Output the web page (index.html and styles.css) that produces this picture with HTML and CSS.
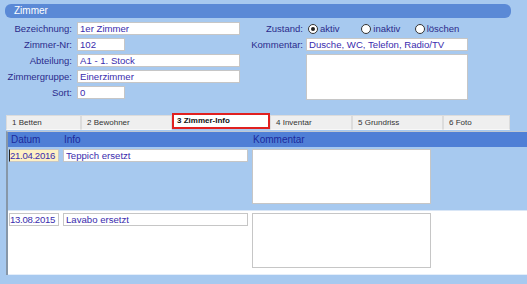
FILE: index.html
```html
<!DOCTYPE html>
<html lang="de">
<head>
  <meta charset="UTF-8" />
  <title>Zimmer</title>
  <link rel="stylesheet" href="styles.css">
</head>
<body>
  <div class="titlebar">Zimmer</div>

  <div class="form">
    <div class="fields">
      <label>Bezeichnung:</label>
      <input type="text" class="wide" value="1er Zimmer">
      <label>Zimmer-Nr:</label>
      <input type="text" class="short" value="102">
      <label>Abteilung:</label>
      <input type="text" class="wide" value="A1 - 1. Stock">
      <label>Zimmergruppe:</label>
      <input type="text" class="wide" value="Einerzimmer">
      <label>Sort:</label>
      <input type="text" class="short" value="0">
    </div>

    <div class="fields right">
      <label>Zustand:</label>
      <div class="radios">
        <span class="radio"><i class="dot checked"></i>aktiv</span>
        <span class="radio"><i class="dot"></i>inaktiv</span>
        <span class="radio"><i class="dot"></i>löschen</span>
      </div>
      <label>Kommentar:</label>
      <input type="text" class="wide" value="Dusche, WC, Telefon, Radio/TV">
      <span></span>
      <textarea class="note"></textarea>
    </div>
  </div>

  <div class="tabs">
    <div class="tab t1">1 Betten</div>
    <div class="tab t2">2 Bewohner</div>
    <div class="tab t3 active">3 Zimmer-Info</div>
    <div class="tab t4">4 Inventar</div>
    <div class="tab t5">5 Grundriss</div>
    <div class="tab t6">6 Foto</div>
  </div>

  <div class="grid">
    <div class="grid-head">
      <span class="c-date">Datum</span>
      <span class="c-info">Info</span>
      <span class="c-note">Kommentar</span>
    </div>
    <div class="grid-row alt">
      <input type="text" class="c-date focus" value="21.04.2016">
      <input type="text" class="c-info" value="Teppich ersetzt">
      <textarea class="c-note"></textarea>
    </div>
    <div class="grid-row">
      <input type="text" class="c-date" value="13.08.2015">
      <input type="text" class="c-info" value="Lavabo ersetzt">
      <textarea class="c-note"></textarea>
    </div>
  </div>
</body>
</html>
```

FILE: styles.css
```css
/* Grundlayout */
*, *::before, *::after {
  box-sizing: border-box;
}
body {
  margin: 0;
  padding: 4px 0 0;
  background-color: #a7c9ef;
  font-family: 'Liberation Sans', Arial, sans-serif;
  font-size: 9.5px;
  color: #2b2b8c;
  overflow: hidden;
}
input, textarea {
  font-family: inherit;
  font-size: 9.6px;
  color: #3a2cae;
  margin: 0;
  background: #fff;
  border: 1px solid #c6c6c6;
  border-radius: 0;
  outline: none;
}
input {
  height: 13px;
  padding: 0 2px;
  line-height: 11px;
}
textarea {
  resize: none;
  padding: 1px 2px;
}

/* Titelleiste */
.titlebar {
  height: 14px;
  margin: 0 16px 0 5px;
  padding-left: 9px;
  border-radius: 6px;
  background-color: #5a89d6;
  color: #fff;
  font-size: 10px;
  line-height: 14px;
}

/* Formular oben */
.form {
  display: flex;
  margin-top: 4px;
}
.fields {
  display: grid;
  grid-template-columns: 72px 163px;
  grid-auto-rows: 13px;
  column-gap: 5px;
  row-gap: 3px;
  align-items: center;
}
.fields label {
  text-align: right;
  white-space: nowrap;
  line-height: 13px;
}
.fields .short {
  width: 48px;
}
.fields .wide {
  width: 163px;
}
.fields.right {
  grid-template-columns: 58px 162px;
  column-gap: 3px;
  margin-left: 5px;
}
.fields.right .wide {
  width: 162px;
}
.fields .note {
  width: 162px;
  height: 46px;
  align-self: start;
  grid-row: span 3;
}
.radios {
  display: flex;
  margin-left: 2px;
}
.radio {
  display: flex;
  align-items: center;
  width: 54px;
  line-height: 13px;
}
.dot {
  width: 10px;
  height: 10px;
  margin-right: 2px;
  border: 1px solid #333;
  border-radius: 50%;
  background: #fff;
  position: relative;
}
.dot.checked::after {
  content: "";
  position: absolute;
  left: 2px;
  top: 2px;
  width: 4px;
  height: 4px;
  border-radius: 50%;
  background: #222;
}

/* Reiter */
.tabs {
  display: flex;
  height: 15px;
  margin: 16px 0 0 6px;
}
.tab {
  height: 15px;
  padding-left: 5px;
  background-color: #efefef;
  border: 1px solid #dcdcdc;
  border-bottom-color: #f8f8f8;
  color: #333;
  font-size: 8px;
  line-height: 13px;
}
.tab.t1 { width: 75px; }
.tab.t2 { width: 91px; }
.tab.t3 { width: 98px; }
.tab.t4 { width: 82px; }
.tab.t5 { width: 91px; }
.tab.t6 { width: 67px; }
.tab.active {
  height: 16px;
  margin-top: -2px;
  background-color: #fff;
  border: 2px solid #e02020;
  color: #111;
  font-weight: bold;
  line-height: 12px;
  padding-left: 3px;
}

/* Tabelle */
.grid {
  margin: 1px 0 0 6px;
  border-left: 2px solid #8797a8;
  border-top: 1px solid #c0c8d2;
}
.grid-head {
  display: flex;
  height: 15px;
  padding: 1px 0 0 3px;
  background-color: #4f7fd6;
  color: #1c2a9c;
  font-size: 10px;
  line-height: 14px;
}
.grid-head .c-date { width: 53px; }
.grid-head .c-info { width: 189px; }
.grid-row {
  display: flex;
  gap: 4px;
  height: 64px;
  padding: 2px 0 0 1px;
  background-color: #fff;
  border-bottom: 1px solid #e4eefa;
}
.grid-row.alt {
  background-color: #a7c9ef;
  border-bottom-color: #d9e6f6;
}
.grid-row .c-date {
  width: 50px;
  padding: 0;
  letter-spacing: -0.3px;
}
.grid-row .c-date.focus {
  background-color: #fdf0c4;
  border-left: 1px solid #222;
}
.grid-row .c-info {
  width: 185px;
}
.grid-row .c-note {
  width: 179px;
  height: 55px;
}
```
